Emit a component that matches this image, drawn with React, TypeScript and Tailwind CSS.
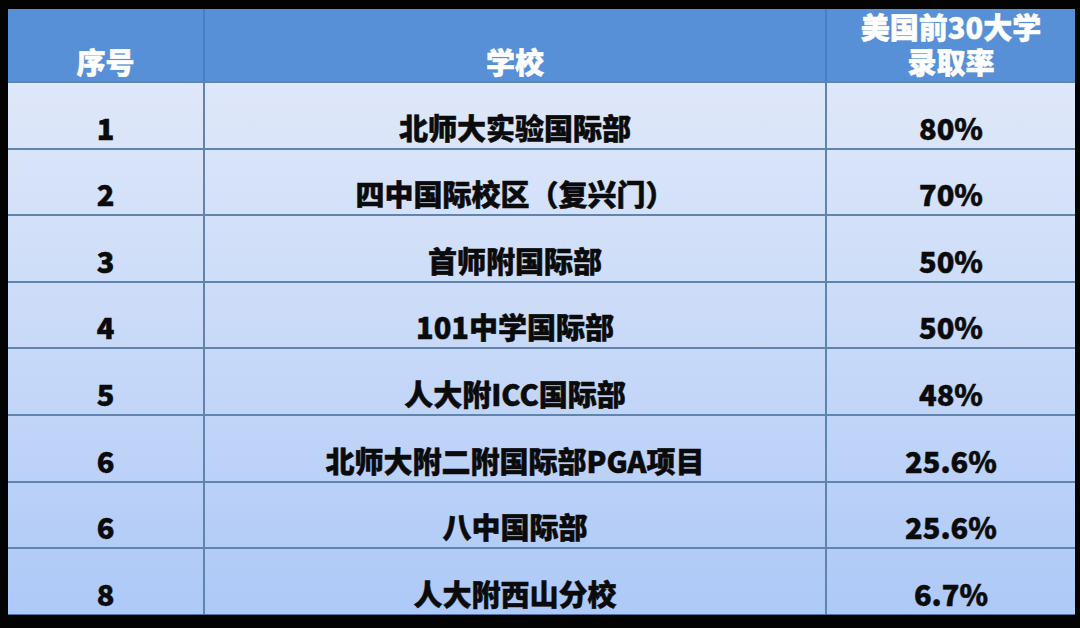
const ROWS = [
  { no: '1', school: '北师大实验国际部', rate: '80%' },
  { no: '2', school: '四中国际校区（复兴门）', rate: '70%' },
  { no: '3', school: '首师附国际部', rate: '50%' },
  { no: '4', school: '101中学国际部', rate: '50%' },
  { no: '5', school: '人大附ICC国际部', rate: '48%' },
  { no: '6', school: '北师大附二附国际部PGA项目', rate: '25.6%' },
  { no: '6', school: '八中国际部', rate: '25.6%' },
  { no: '8', school: '人大附西山分校', rate: '6.7%' },
];

const FONT = { fontFamily: '"Noto Sans CJK SC", "Noto Sans", sans-serif' };

export default function App() {
  return (
    <div className="h-[628px] w-[1080px] bg-[#030303] pl-[8px] pt-[9px]" style={FONT}>
      <div className="w-[1067px] border-b border-[#4d72a0]">
        {/* header */}
        <div className="flex h-[72px] bg-[#5790d6] text-[29px] font-black leading-[35px] text-white [-webkit-text-stroke:0.5px_white]">
          <div className="flex w-[197px] items-end justify-center border-r-2 border-[#4a7ec2] pb-[2px]">
            序号
          </div>
          <div className="flex w-[622px] items-end justify-center border-r-2 border-[#4a7ec2] pb-[2px]">
            学校
          </div>
          <div className="flex w-[248px] items-end justify-center pb-[2px] text-center">
            <span>
              美国前30大学
              <br />
              录取率
            </span>
          </div>
        </div>

        {/* body */}
        <div className="bg-gradient-to-b from-[#dfe8f9] via-[#c8d9f8] to-[#adc9f7] text-[29px] font-black leading-[29px] text-[#0b0b0b] [-webkit-text-stroke:0.5px_#0b0b0b]">
          {ROWS.map((r, i) => (
            <div key={i} className="flex h-[66.6px] border-t-2 border-[#5f84ae]">
              <div className="flex w-[197px] items-end justify-center border-r-2 border-[#5f84ae] pb-[6px]">
                {r.no}
              </div>
              <div className="flex w-[622px] items-end justify-center border-r-2 border-[#5f84ae] pb-[6px]">
                {r.school}
              </div>
              <div className="flex w-[248px] items-end justify-center pb-[6px]">
                {r.rate}
              </div>
            </div>
          ))}
        </div>
      </div>
    </div>
  );
}
